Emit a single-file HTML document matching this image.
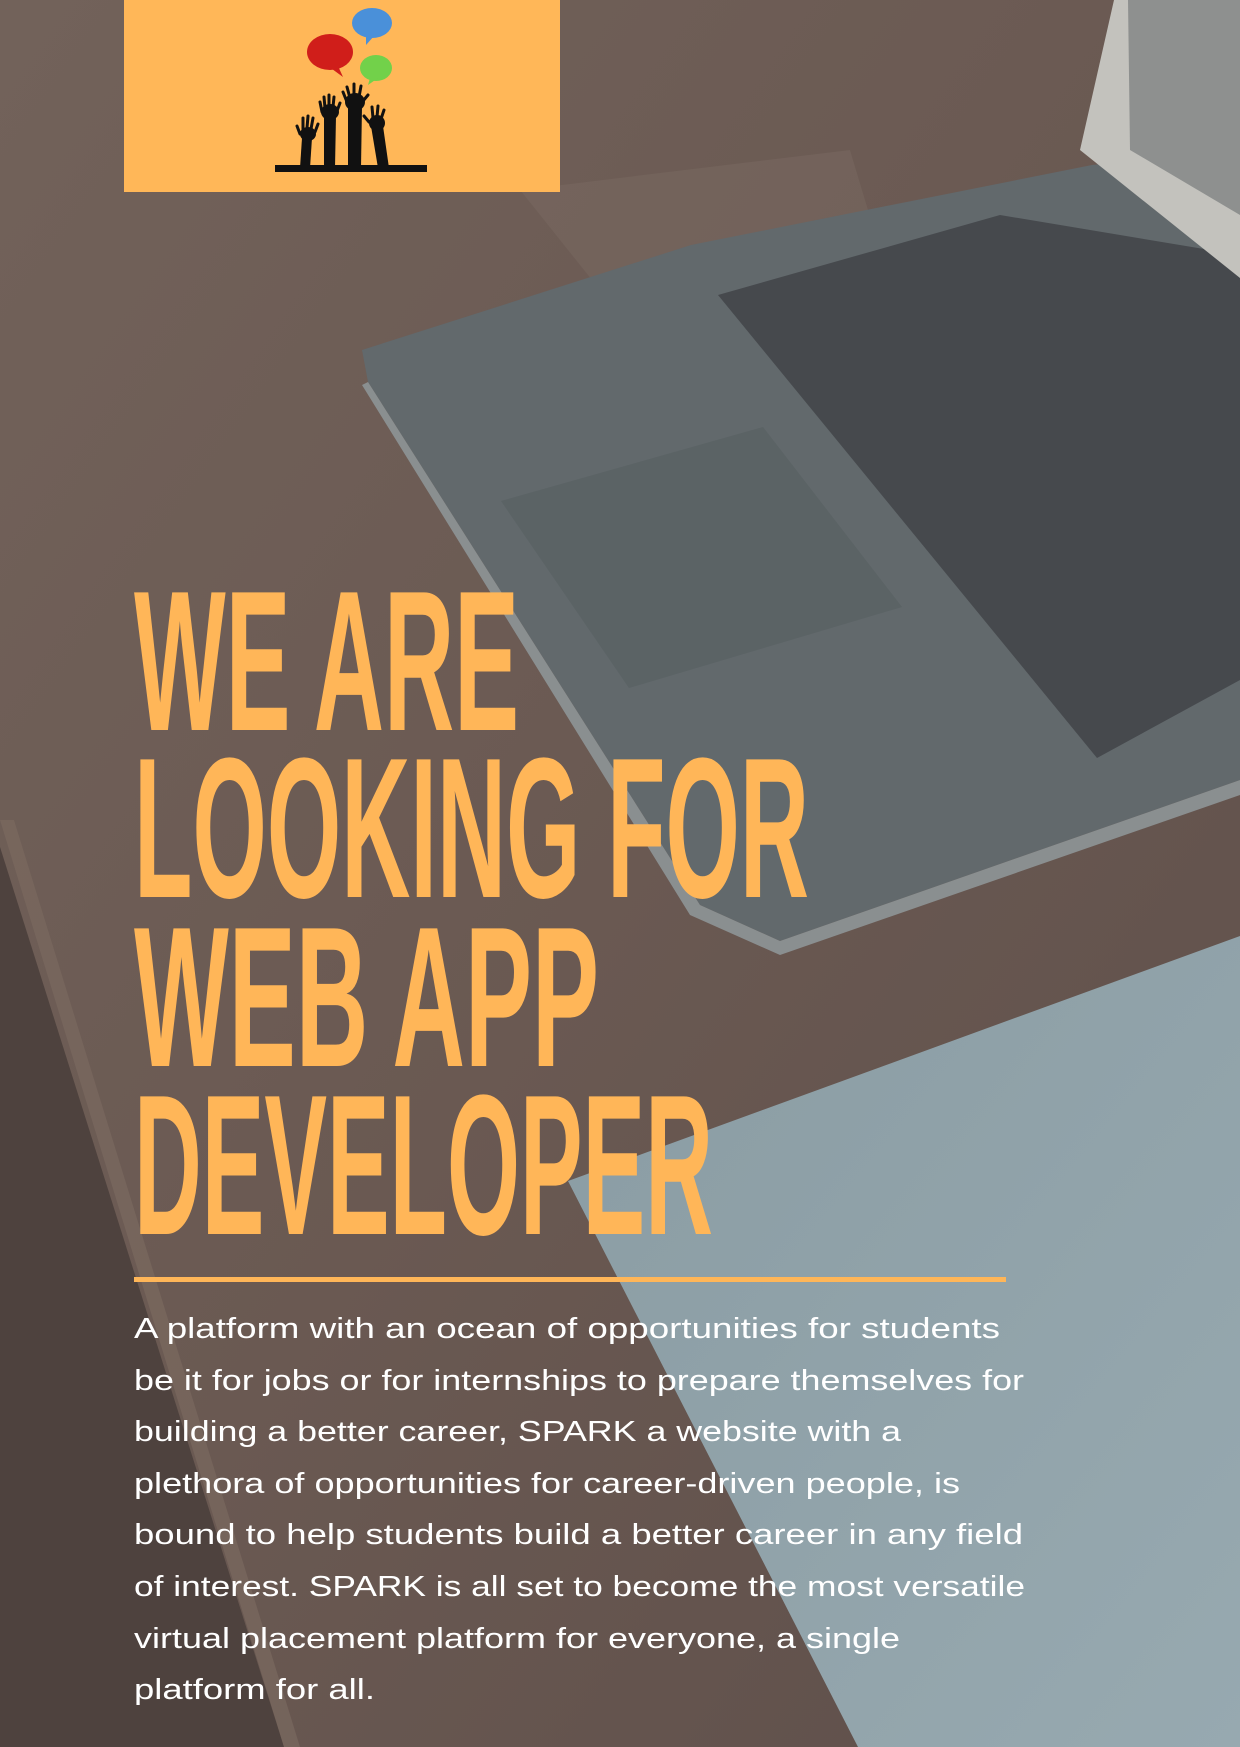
<!DOCTYPE html>
<html><head><meta charset="utf-8"><style>
html,body{margin:0;padding:0;background:#6b5a52;}
svg{display:block}
</style></head><body>
<svg width="1240" height="1747" viewBox="0 0 1240 1747" xmlns="http://www.w3.org/2000/svg">
<defs>
<linearGradient id="wood" x1="0" y1="0" x2="1" y2="1">
<stop offset="0" stop-color="#72625a"/><stop offset="0.5" stop-color="#6a5952"/><stop offset="1" stop-color="#5e4f4a"/>
</linearGradient>
<linearGradient id="paper" x1="0" y1="0" x2="1" y2="1">
<stop offset="0" stop-color="#8a9ca3"/><stop offset="1" stop-color="#97a9b0"/>
</linearGradient>
</defs>
<rect width="1240" height="1747" fill="url(#wood)"/>
<polygon points="520,190 850,150 880,250 600,290" fill="#7a6a62" opacity="0.5"/>
<polygon points="0,847 284,1747 0,1747" fill="#4e423e"/>
<polygon points="0,820 14,820 300,1747 284,1747" fill="#7a6960" opacity="0.7"/>
<!-- laptop -->
<polygon points="362,350 691,245 1092,165 1240,150 1240,780 780,941 700,905 368,382" fill="#62696c"/>
<polygon points="368,382 700,905 780,941 1240,780 1240,795 780,955 690,915 362,385" fill="#8a8f90"/>
<polygon points="718,295 1000,215 1240,255 1240,680 1097,758" fill="#46494d"/>
<polygon points="501,501 763,427 902,607 629,688" fill="#5b6365"/>
<polygon points="1080,150 1114,0 1240,0 1240,278" fill="#c3c2bd"/>
<polygon points="1128,0 1240,0 1240,215 1130,150" fill="#8e908f"/>
<!-- paper -->
<polygon points="568,1181 1240,936 1240,1747 858,1747" fill="url(#paper)"/>
<!-- logo -->
<rect x="124" y="0" width="436" height="192" fill="#ffb758"/>
<ellipse cx="372" cy="23" rx="20" ry="15" fill="#4a90d9"/>
<polygon points="366,36 374,36 366,45" fill="#4a90d9"/>
<ellipse cx="330" cy="52" rx="23" ry="18" fill="#d01e1a"/>
<polygon points="328,66 338,66 343,77" fill="#d01e1a"/>
<ellipse cx="376" cy="68" rx="16" ry="13" fill="#72d14a"/>
<polygon points="370,78 378,78 368,85" fill="#72d14a"/>
<g stroke="#111" stroke-linecap="round" fill="#111">
<g stroke-width="3">
<line x1="303" y1="130" x2="303" y2="118"/><line x1="307" y1="128" x2="308" y2="116"/><line x1="311" y1="129" x2="313" y2="118"/><line x1="315" y1="132" x2="318" y2="124"/><line x1="300" y1="134" x2="297" y2="126"/>
<line x1="325" y1="108" x2="324" y2="97"/><line x1="329" y1="106" x2="329" y2="95"/><line x1="333" y1="107" x2="334" y2="97"/><line x1="337" y1="111" x2="340" y2="103"/><line x1="322" y1="112" x2="320" y2="102"/>
<line x1="350" y1="98" x2="347" y2="87"/><line x1="354" y1="96" x2="354" y2="84"/><line x1="359" y1="97" x2="361" y2="86"/><line x1="363" y1="101" x2="368" y2="95"/><line x1="347" y1="102" x2="343" y2="92"/>
<line x1="373" y1="118" x2="372" y2="107"/><line x1="377" y1="117" x2="378" y2="106"/><line x1="381" y1="119" x2="384" y2="110"/><line x1="369" y1="122" x2="364" y2="116"/>
</g>
<ellipse cx="308" cy="134" rx="8" ry="7" stroke="none"/>
<ellipse cx="330" cy="112" rx="9" ry="8" stroke="none"/>
<ellipse cx="355" cy="102" rx="10" ry="9" stroke="none"/>
<ellipse cx="377" cy="123" rx="8" ry="8" stroke="none"/>
<polygon points="302,138 312,138 310,168 300,168" stroke="none"/>
<polygon points="324,116 336,116 335,168 324,168" stroke="none"/>
<polygon points="348,106 362,106 361,168 348,168" stroke="none"/>
<polygon points="371,126 383,126 389,168 378,168" stroke="none"/>
<rect x="275" y="165" width="152" height="7" stroke="none"/>
</g>
<!-- title -->
<g fill="#ffb658" font-family="Liberation Sans Narrow, Liberation Sans, sans-serif" font-weight="bold" font-size="200">
<text x="134" y="730" textLength="385" lengthAdjust="spacingAndGlyphs">WE ARE</text>
<text x="134" y="897" textLength="675" lengthAdjust="spacingAndGlyphs">LOOKING FOR</text>
<text x="134" y="1066" textLength="465" lengthAdjust="spacingAndGlyphs">WEB APP</text>
<text x="134" y="1234" textLength="579" lengthAdjust="spacingAndGlyphs">DEVELOPER</text>
</g>
<rect x="134" y="1277" width="872" height="5" fill="#ffb658"/>
<g fill="#ffffff" font-family="Liberation Sans, sans-serif" font-size="29">
<text x="134" y="1338" textLength="866" lengthAdjust="spacingAndGlyphs">A platform with an ocean of opportunities for students</text>
<text x="134" y="1390" textLength="890" lengthAdjust="spacingAndGlyphs">be it for jobs or for internships to prepare themselves for</text>
<text x="134" y="1441" textLength="767" lengthAdjust="spacingAndGlyphs">building a better career, SPARK a website with a</text>
<text x="134" y="1493" textLength="826" lengthAdjust="spacingAndGlyphs">plethora of opportunities for career-driven people, is</text>
<text x="134" y="1544" textLength="889" lengthAdjust="spacingAndGlyphs">bound to help students build a better career in any field</text>
<text x="134" y="1596" textLength="891" lengthAdjust="spacingAndGlyphs">of interest. SPARK is all set to become the most versatile</text>
<text x="134" y="1648" textLength="766" lengthAdjust="spacingAndGlyphs">virtual placement platform for everyone, a single</text>
<text x="134" y="1699" textLength="241" lengthAdjust="spacingAndGlyphs">platform for all.</text>
</g>
</svg>
</body></html>
